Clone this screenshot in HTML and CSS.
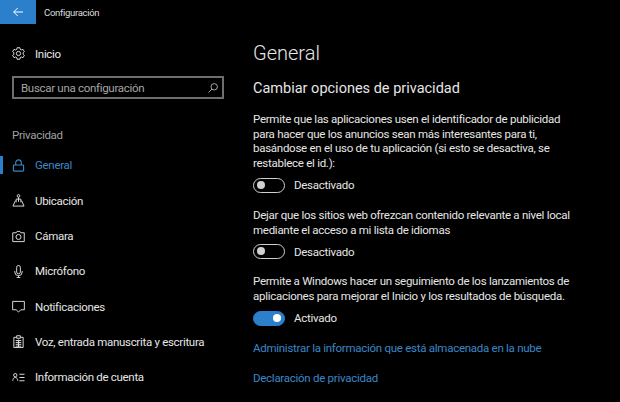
FILE: index.html
```html
<!DOCTYPE html>
<html lang="es">
<head>
    <meta charset="UTF-8">
    <title>Configuración</title>
    <link rel="stylesheet" href="styles.css">
</head>
<body>
    <header class="titlebar">
        <a class="back-button" href="#">
            <svg width="10" height="10" viewBox="0 0 10 10" fill="none" stroke="#fff" stroke-width="1">
                <path d="M0.7 5H10M4.700 1L0.700 5L4.700 9"/>
            </svg>
        </a>
        <span class="app-title">Configuración</span>
    </header>

    <div class="window">
        <nav class="sidebar">
            <a class="nav-item home-item" href="#">
                <svg class="nav-icon" viewBox="0 0 14 14" fill="none" stroke="currentColor">
                    <circle cx="7" cy="7" r="2.3"/>
                    <path d="M5.5 0.800H8.500L8.800 2.500L10.200 3.200L11.800 2.500L13.300 5L12 6.100V7.900L13.300 9L11.800 11.500L10.200 10.800L8.800 11.500L8.500 13.200H5.500L5.200 11.500L3.800 10.800L2.200 11.500L0.700 9L2 7.900V6.100L0.700 5L2.200 2.500L3.800 3.200L5.200 2.500Z"/>
                </svg>
                Inicio
            </a>

            <form class="search-form" action="#">
                <input class="search-input" type="text" placeholder="Buscar una configuración">
                <svg class="search-icon" viewBox="0 0 10 10" fill="none" stroke="#a6a6a6">
                    <circle cx="6.200" cy="3.800" r="3.200"/>
                    <path d="M4 6L0.500 9.500"/>
                </svg>
            </form>

            <div class="nav-heading">Privacidad</div>

            <ul class="nav-list">
                <li>
                    <a class="nav-item active" href="#">
                        <svg class="nav-icon" viewBox="0 0 14 14" fill="none" stroke="currentColor" stroke-width="1.200">
                            <rect x="1.500" y="6.500" width="11" height="6.500" rx="1"/>
                            <path d="M4 6.500V4a3 3 0 0 1 6 0V6.500"/>
                        </svg>
                        General
                    </a>
                </li>
                <li>
                    <a class="nav-item" href="#">
                        <svg class="nav-icon" viewBox="0 0 14 14" fill="none" stroke="currentColor">
                            <circle cx="7" cy="2" r="1.400"/>
                            <path d="M7 3.400V8.500M4.500 9V5.500H9.500V9M3.800 7L1 13H13L10.200 7"/>
                        </svg>
                        Ubicación
                    </a>
                </li>
                <li>
                    <a class="nav-item" href="#">
                        <svg class="nav-icon" viewBox="0 0 14 14" fill="none" stroke="currentColor">
                            <path d="M0.800 3H4.500L5.500 1.500H8.500L9.500 3H13.200V12.500H0.800Z"/>
                            <circle cx="7" cy="7.500" r="2.700"/>
                        </svg>
                        Cámara
                    </a>
                </li>
                <li>
                    <a class="nav-item" href="#">
                        <svg class="nav-icon" viewBox="0 0 14 14" fill="none" stroke="currentColor">
                            <rect x="5" y="0.500" width="4" height="9" rx="2"/>
                            <path d="M3 6.500V7.500a4 4 0 0 0 8 0V6.500M7 11.500V13.500M5 13.500H9"/>
                        </svg>
                        Micrófono
                    </a>
                </li>
                <li>
                    <a class="nav-item" href="#">
                        <svg class="nav-icon" viewBox="0 0 14 14" fill="none" stroke="currentColor">
                            <path d="M0.700 1.500H13.300V10.500H9.500L7 13L4.500 10.500H0.700Z"/>
                        </svg>
                        Notificaciones
                    </a>
                </li>
                <li>
                    <a class="nav-item" href="#">
                        <svg class="nav-icon" viewBox="0 0 14 14" fill="none" stroke="currentColor">
                            <path d="M4.500 2.500H2V13.500H12V2.500H9.500M5 0.800H9V3.500H5ZM4 6H10M4 8H10M4 10H10M4 12H10M7 5V13"/>
                        </svg>
                        Voz, entrada manuscrita y escritura
                    </a>
                </li>
                <li>
                    <a class="nav-item" href="#">
                        <svg class="nav-icon" viewBox="0 0 14 14" fill="none" stroke="currentColor">
                            <circle cx="3.500" cy="4.500" r="1.800"/>
                            <path d="M0.800 10.500C0.800 8.500 2 7 3.500 7S6.200 8.500 6.200 10.500M8 3.500H13.500M8 7H13.500M8 10.500H13.500"/>
                        </svg>
                        Información de cuenta
                    </a>
                </li>
            </ul>
        </nav>

        <main class="content">
            <h1>General</h1>
            <h2>Cambiar opciones de privacidad</h2>

            <p class="option-text">Permite que las aplicaciones usen el identificador de publicidad para hacer que los anuncios sean más interesantes para ti, basándose en el uso de tu aplicación (si esto se desactiva, se restablece el id.):</p>
            <div class="toggle-row">
                <span class="toggle"></span>
                Desactivado
            </div>

            <p class="option-text">Dejar que los sitios web ofrezcan contenido relevante a nivel local mediante el acceso a mi lista de idiomas</p>
            <div class="toggle-row">
                <span class="toggle"></span>
                Desactivado
            </div>

            <p class="option-text">Permite a Windows hacer un seguimiento de los lanzamientos de aplicaciones para mejorar el Inicio y los resultados de búsqueda.</p>
            <div class="toggle-row">
                <span class="toggle on"></span>
                Activado
            </div>

            <a class="link" href="#">Administrar la información que está almacenada en la nube</a>
            <a class="link" href="#">Declaración de privacidad</a>
        </main>
    </div>
</body>
</html>
```

FILE: styles.css
```css
* {
    margin: 0;
    padding: 0;
    box-sizing: border-box;
}

html, body {
    height: 100%;
    overflow: hidden;
}

body {
    background-color: #000;
    color: #e6e6e6;
    font-family: Roboto, "Noto Sans", sans-serif;
    font-size: 11.5px;
    letter-spacing: -0.3px;
}

a {
    text-decoration: none;
}

.titlebar {
    display: flex;
    align-items: center;
    height: 24px;
}

.back-button {
    display: flex;
    align-items: center;
    justify-content: center;
    width: 36px;
    height: 24px;
    background-color: #2b7fcb;
}

.app-title {
    margin-left: 8px;
    font-size: 9.5px;
    color: #ddd;
}

.window {
    display: flex;
}

.sidebar {
    width: 253px;
    flex-shrink: 0;
}

.nav-item {
    display: flex;
    align-items: center;
    gap: 10px;
    height: 35.3px;
    padding-left: 12px;
    color: #e6e6e6;
}

.nav-icon {
    width: 13px;
    height: 13px;
    flex-shrink: 0;
}

.home-item {
    margin-top: 12px;
}

.nav-item.active {
    color: #3a87c8;
    position: relative;
}

.nav-item.active::before {
    content: "";
    position: absolute;
    left: 0;
    top: 8px;
    width: 3px;
    height: 18px;
    background-color: #2b7fcb;
}

.search-form {
    position: relative;
    margin: 5px 17px 0 12px;
    width: 212px;
}

.search-input {
    display: block;
    width: 100%;
    height: 23px;
    padding: 0 28px 0 7px;
    background-color: #000;
    border: 2px solid #6e6e6e;
    color: #e6e6e6;
    font-family: inherit;
    font-size: 11.5px;
    letter-spacing: -0.3px;
}

.search-input::placeholder {
    color: #a6a6a6;
    opacity: 1;
}

.search-icon {
    position: absolute;
    right: 6px;
    top: 7px;
    width: 10px;
    height: 10px;
}

.nav-heading {
    margin: 28px 0 4.5px 12px;
    color: #a0a0a0;
    line-height: 16px;
}

.nav-list {
    list-style: none;
}

.content {
    flex: 1;
    padding-right: 12px;
    color: #e6e6e6;
    letter-spacing: -0.27px;
}

h1 {
    margin-top: 14px;
    font-size: 20px;
    font-weight: 300;
    line-height: 30px;
    letter-spacing: 0;
}

h2 {
    margin-top: 11px;
    font-size: 14.5px;
    font-weight: 400;
    line-height: 20px;
    letter-spacing: 0;
}

.option-text {
    width: 325px;
    line-height: 14.7px;
}

h2 + .option-text {
    margin-top: 13px;
}

.toggle-row {
    display: flex;
    align-items: center;
    gap: 9px;
    height: 15px;
    margin-top: 7px;
    margin-bottom: 15px;
}

.toggle {
    position: relative;
    display: block;
    width: 32px;
    height: 15px;
    border: 1.500px solid #d0d0d0;
    border-radius: 8px;
}

.toggle::after {
    content: "";
    position: absolute;
    left: 3px;
    top: 2px;
    width: 8px;
    height: 8px;
    border-radius: 50%;
    background-color: #d0d0d0;
}

.toggle.on {
    background-color: #2b7fcb;
    border-color: #2b7fcb;
}

.toggle.on::after {
    left: auto;
    right: 3px;
    background-color: #fff;
}

.link {
    display: block;
    color: #3a87c8;
    line-height: 15px;
    margin-bottom: 15px;
}
```
